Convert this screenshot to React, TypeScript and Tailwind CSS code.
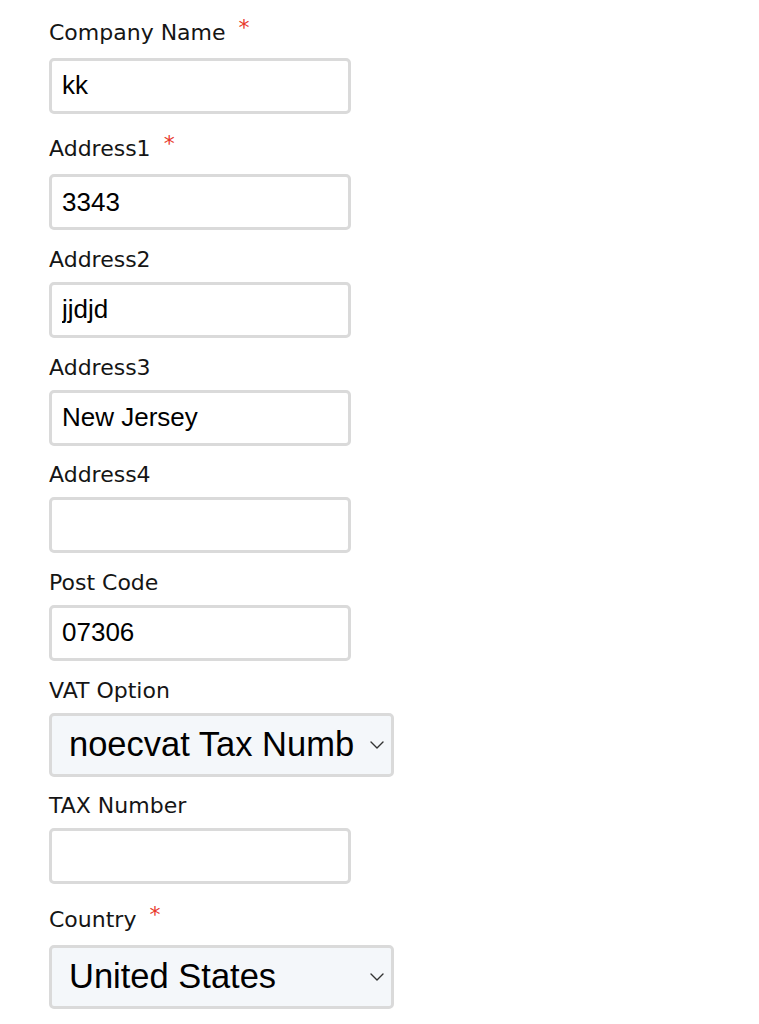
import React from 'react';

interface Field {
  label: string;
  required?: boolean;
  kind: 'input' | 'select';
  value: string;
  options?: string[];
}

const fields: Field[] = [
  { label: 'Company Name', required: true, kind: 'input', value: 'kk' },
  { label: 'Address1', required: true, kind: 'input', value: '3343' },
  { label: 'Address2', kind: 'input', value: 'jjdjd' },
  { label: 'Address3', kind: 'input', value: 'New Jersey' },
  { label: 'Address4', kind: 'input', value: '' },
  { label: 'Post Code', kind: 'input', value: '07306' },
  {
    label: 'VAT Option',
    kind: 'select',
    value: 'noecvat',
    options: ['noecvat'],
  },
  { label: 'TAX Number', kind: 'input', value: '' },
  {
    label: 'Country',
    required: true,
    kind: 'select',
    value: 'US',
    options: ['US'],
  },
];

const optionLabels: Record<string, string> = {
  noecvat: 'noecvat Tax Number',
  US: 'United States',
};

function Chevron() {
  return (
    <>
      {/* covers the overflow of long option text next to the arrow */}
      <span className="pointer-events-none absolute z-10 right-[3px] top-[3px] bottom-[3px] w-[37px] rounded-r-[3px] bg-[#f4f7fa]" />
      <svg
        className="pointer-events-none absolute z-20 right-[10px] top-1/2 -translate-y-1/2"
        width="14"
        height="8"
        viewBox="0 0 14 8"
        fill="none"
      >
        <path d="M1 1l6 6 6-6" stroke="#333" strokeWidth="1.4" strokeLinecap="round" strokeLinejoin="round" />
      </svg>
    </>
  );
}

function FormField({ field, first }: { field: Field; first: boolean }) {
  return (
    <div className={first ? '' : 'mt-[15.7px]'}>
      <label
        className={`block leading-[28px] mb-2 text-[22px] text-[#151515] font-['DejaVu_Sans',sans-serif] ${
          field.required ? 'pt-[6px] pb-[3px]' : ''
        }`}
      >
        {field.label}
        {field.required && (
          <span className="relative -top-[5px] ml-[13px] text-[#e8392c]">*</span>
        )}
      </label>
      {field.kind === 'input' ? (
        <input
          type="text"
          defaultValue={field.value}
          className="block w-[302px] h-[56px] border-[3px] border-[#dadada] rounded-[5px] bg-white px-[10px] text-[26px] text-black font-['Liberation_Sans',Arial,sans-serif] outline-none"
        />
      ) : (
        <div className="relative w-[345px]">
          <select
            defaultValue={field.value}
            className="block w-full h-[64px] appearance-none border-[3px] border-[#dadada] rounded-[5px] bg-[#f4f7fa] pl-[17px] pr-[37px] text-[34.5px] text-black font-['Liberation_Sans',Arial,sans-serif] outline-none"
          >
            {field.options?.map(o => (
              <option key={o} value={o}>
                {optionLabels[o]}
              </option>
            ))}
          </select>
          <Chevron />
        </div>
      )}
    </div>
  );
}

export default function App() {
  return (
    <div className="min-h-[1024px] bg-white pt-[12.5px] pl-[49px]">
      {fields.map((f, i) => (
        <FormField key={f.label} field={f} first={i === 0} />
      ))}
    </div>
  );
}
